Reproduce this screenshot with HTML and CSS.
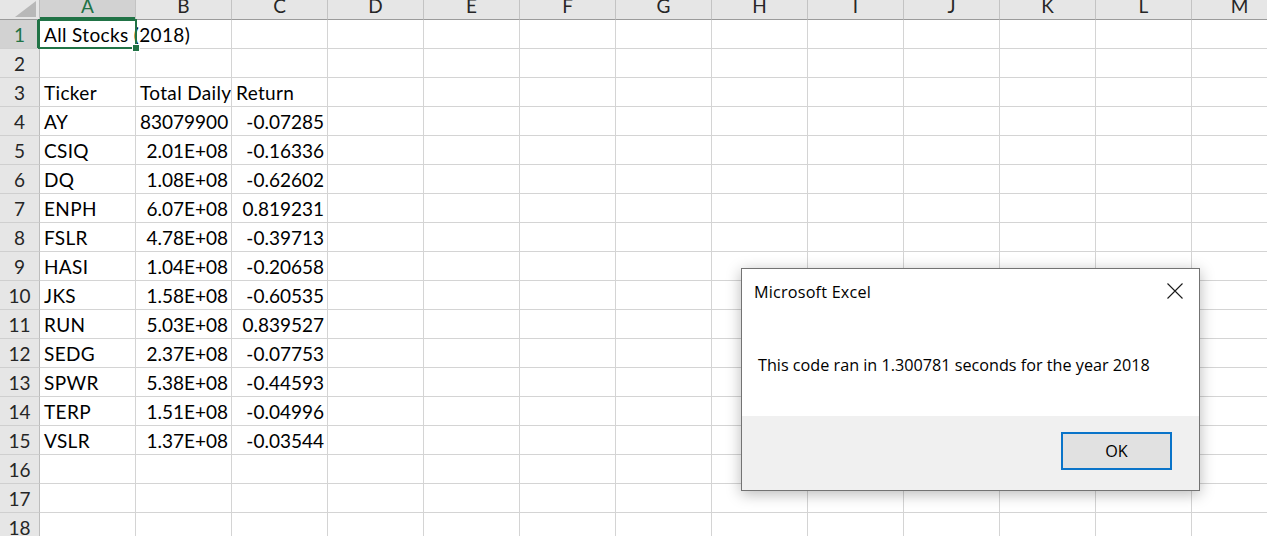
FILE: index.html
```html
<!DOCTYPE html>
<html>
<head>
<meta charset="utf-8">
<link rel="stylesheet" href="styles.css">
</head>
<body>
<div class="sheet">
  <div class="corner"><svg width="40" height="20" viewBox="0 0 40 20"><polygon points="15,17 36,17 36,1" fill="#b8b8b8"/></svg></div>
  <div class="ch sel">A</div><div class="ch">B</div><div class="ch">C</div><div class="ch">D</div><div class="ch">E</div><div class="ch">F</div><div class="ch">G</div><div class="ch">H</div><div class="ch">I</div><div class="ch">J</div><div class="ch">K</div><div class="ch">L</div><div class="ch">M</div>

  <div class="rh sel">1</div><div class="c ov">All Stocks (2018)</div><div class="c"></div><div class="c"></div><div class="c"></div><div class="c"></div><div class="c"></div><div class="c"></div><div class="c"></div><div class="c"></div><div class="c"></div><div class="c"></div><div class="c"></div><div class="c"></div>
  <div class="rh">2</div><div class="c"></div><div class="c"></div><div class="c"></div><div class="c"></div><div class="c"></div><div class="c"></div><div class="c"></div><div class="c"></div><div class="c"></div><div class="c"></div><div class="c"></div><div class="c"></div><div class="c"></div>
  <div class="rh">3</div><div class="c">Ticker</div><div class="c">Total Daily Return</div><div class="c">Return</div><div class="c"></div><div class="c"></div><div class="c"></div><div class="c"></div><div class="c"></div><div class="c"></div><div class="c"></div><div class="c"></div><div class="c"></div><div class="c"></div>
  <div class="rh">4</div><div class="c">AY</div><div class="c n">83079900</div><div class="c n">-0.07285</div><div class="c"></div><div class="c"></div><div class="c"></div><div class="c"></div><div class="c"></div><div class="c"></div><div class="c"></div><div class="c"></div><div class="c"></div><div class="c"></div>
  <div class="rh">5</div><div class="c">CSIQ</div><div class="c n">2.01E+08</div><div class="c n">-0.16336</div><div class="c"></div><div class="c"></div><div class="c"></div><div class="c"></div><div class="c"></div><div class="c"></div><div class="c"></div><div class="c"></div><div class="c"></div><div class="c"></div>
  <div class="rh">6</div><div class="c">DQ</div><div class="c n">1.08E+08</div><div class="c n">-0.62602</div><div class="c"></div><div class="c"></div><div class="c"></div><div class="c"></div><div class="c"></div><div class="c"></div><div class="c"></div><div class="c"></div><div class="c"></div><div class="c"></div>
  <div class="rh">7</div><div class="c">ENPH</div><div class="c n">6.07E+08</div><div class="c n">0.819231</div><div class="c"></div><div class="c"></div><div class="c"></div><div class="c"></div><div class="c"></div><div class="c"></div><div class="c"></div><div class="c"></div><div class="c"></div><div class="c"></div>
  <div class="rh">8</div><div class="c">FSLR</div><div class="c n">4.78E+08</div><div class="c n">-0.39713</div><div class="c"></div><div class="c"></div><div class="c"></div><div class="c"></div><div class="c"></div><div class="c"></div><div class="c"></div><div class="c"></div><div class="c"></div><div class="c"></div>
  <div class="rh">9</div><div class="c">HASI</div><div class="c n">1.04E+08</div><div class="c n">-0.20658</div><div class="c"></div><div class="c"></div><div class="c"></div><div class="c"></div><div class="c"></div><div class="c"></div><div class="c"></div><div class="c"></div><div class="c"></div><div class="c"></div>
  <div class="rh">10</div><div class="c">JKS</div><div class="c n">1.58E+08</div><div class="c n">-0.60535</div><div class="c"></div><div class="c"></div><div class="c"></div><div class="c"></div><div class="c"></div><div class="c"></div><div class="c"></div><div class="c"></div><div class="c"></div><div class="c"></div>
  <div class="rh">11</div><div class="c">RUN</div><div class="c n">5.03E+08</div><div class="c n">0.839527</div><div class="c"></div><div class="c"></div><div class="c"></div><div class="c"></div><div class="c"></div><div class="c"></div><div class="c"></div><div class="c"></div><div class="c"></div><div class="c"></div>
  <div class="rh">12</div><div class="c">SEDG</div><div class="c n">2.37E+08</div><div class="c n">-0.07753</div><div class="c"></div><div class="c"></div><div class="c"></div><div class="c"></div><div class="c"></div><div class="c"></div><div class="c"></div><div class="c"></div><div class="c"></div><div class="c"></div>
  <div class="rh">13</div><div class="c">SPWR</div><div class="c n">5.38E+08</div><div class="c n">-0.44593</div><div class="c"></div><div class="c"></div><div class="c"></div><div class="c"></div><div class="c"></div><div class="c"></div><div class="c"></div><div class="c"></div><div class="c"></div><div class="c"></div>
  <div class="rh">14</div><div class="c">TERP</div><div class="c n">1.51E+08</div><div class="c n">-0.04996</div><div class="c"></div><div class="c"></div><div class="c"></div><div class="c"></div><div class="c"></div><div class="c"></div><div class="c"></div><div class="c"></div><div class="c"></div><div class="c"></div>
  <div class="rh">15</div><div class="c">VSLR</div><div class="c n">1.37E+08</div><div class="c n">-0.03544</div><div class="c"></div><div class="c"></div><div class="c"></div><div class="c"></div><div class="c"></div><div class="c"></div><div class="c"></div><div class="c"></div><div class="c"></div><div class="c"></div>
  <div class="rh">16</div><div class="c"></div><div class="c"></div><div class="c"></div><div class="c"></div><div class="c"></div><div class="c"></div><div class="c"></div><div class="c"></div><div class="c"></div><div class="c"></div><div class="c"></div><div class="c"></div><div class="c"></div>
  <div class="rh">17</div><div class="c"></div><div class="c"></div><div class="c"></div><div class="c"></div><div class="c"></div><div class="c"></div><div class="c"></div><div class="c"></div><div class="c"></div><div class="c"></div><div class="c"></div><div class="c"></div><div class="c"></div>
  <div class="rh">18</div><div class="c"></div><div class="c"></div><div class="c"></div><div class="c"></div><div class="c"></div><div class="c"></div><div class="c"></div><div class="c"></div><div class="c"></div><div class="c"></div><div class="c"></div><div class="c"></div><div class="c"></div>

  <div class="selection"><span class="handle"></span></div>
</div>

<div class="dialog">
  <div class="dlg-head">
    <span class="dlg-title">Microsoft Excel</span>
    <svg class="dlg-close" width="16" height="16" viewBox="0 0 16 16"><path d="M0.5 0.5 L15.5 15.5 M15.5 0.5 L0.5 15.5" stroke="#1a1a1a" stroke-width="1.1" fill="none"/></svg>
  </div>
  <div class="dlg-body">This code ran in 1.300781 seconds for the year 2018</div>
  <div class="dlg-foot"><button class="dlg-btn">OK</button></div>
</div>
</body>
</html>
```

FILE: styles.css
```css
html, body {
  margin: 0;
  padding: 0;
  background: #ffffff;
  overflow: hidden;
  width: 1267px;
  height: 536px;
}

.sheet {
  position: relative;
  display: grid;
  grid-template-columns: 40px repeat(13, 96px);
  grid-template-rows: 20px repeat(18, 29px);
  font-family: Lato, "Liberation Sans", sans-serif;
  font-size: 19px;
  color: #000;
}

.corner {
  background: #e6e6e6;
  border-right: 1px solid #bdbdbd;
  border-bottom: 1px solid #9b9b9b;
  box-sizing: border-box;
  overflow: hidden;
}
.corner svg { display: block; }

.ch {
  background: #e6e6e6;
  border-right: 1px solid #c3c3c3;
  border-bottom: 1px solid #9b9b9b;
  box-sizing: border-box;
  text-align: center;
  line-height: 12px;
  color: #262626;
  white-space: nowrap;
}
.ch.sel {
  background: #d2d2d2;
  color: #217346;
  box-shadow: inset 0 -2px 0 #217346;
}

.rh {
  background: #e6e6e6;
  border-right: 1px solid #bdbdbd;
  border-bottom: 1px solid #cfcfcf;
  box-sizing: border-box;
  text-align: center;
  padding-top: 1px;
  line-height: 27px;
  color: #262626;
}
.rh.sel {
  background: #d2d2d2;
  color: #217346;
  box-shadow: inset -2px 0 0 #217346;
}

.c {
  border-right: 1px solid #d4d4d4;
  border-bottom: 1px solid #d4d4d4;
  box-sizing: border-box;
  padding: 1px 3px 0 4px;
  line-height: 27px;
  letter-spacing: 0.35px;
  white-space: nowrap;
  overflow: hidden;
}
.c.ov { overflow: visible; position: relative; z-index: 1; }
.c.n { text-align: right; letter-spacing: 0; }

.selection {
  position: absolute;
  left: 38px;
  top: 19px;
  width: 99px;
  height: 30px;
  border: 2px solid #217346;
  box-sizing: border-box;
  z-index: 2;
}
.handle {
  position: absolute;
  right: -5px;
  bottom: -5px;
  width: 6px;
  height: 6px;
  background: #217346;
  border: 1px solid #ffffff;
}

.dialog {
  position: absolute;
  left: 741px;
  top: 268px;
  width: 459px;
  height: 223px;
  box-sizing: border-box;
  border: 1px solid #737373;
  background: #ffffff;
  box-shadow: 0 3px 14px rgba(0, 0, 0, 0.28);
  display: flex;
  flex-direction: column;
  font-family: "Open Sans", "Noto Sans", sans-serif;
  font-size: 16.2px;
  color: #000;
  z-index: 5;
}
.dlg-head {
  height: 42px;
  display: flex;
  justify-content: space-between;
  align-items: flex-start;
  padding: 0 16px 0 12px;
}
.dlg-title {
  padding-top: 13px;
  line-height: 20px;
  letter-spacing: 0.2px;
}
.dlg-close {
  margin-top: 14px;
  display: block;
}
.dlg-body {
  height: 105px;
  box-sizing: border-box;
  padding: 44px 0 0 16px;
  line-height: 20px;
  white-space: nowrap;
}
.dlg-foot {
  flex: 1;
  background: #f0f0f0;
  display: flex;
  justify-content: flex-end;
  align-items: flex-start;
  padding: 16px 27px 0 0;
}
.dlg-btn {
  width: 111px;
  height: 38px;
  box-sizing: border-box;
  border: 2px solid #0a74c9;
  background: #e1e1e1;
  font-family: "Open Sans", "Noto Sans", sans-serif;
  font-size: 16.2px;
  color: #000;
  padding: 0;
  margin: 0;
}
```
